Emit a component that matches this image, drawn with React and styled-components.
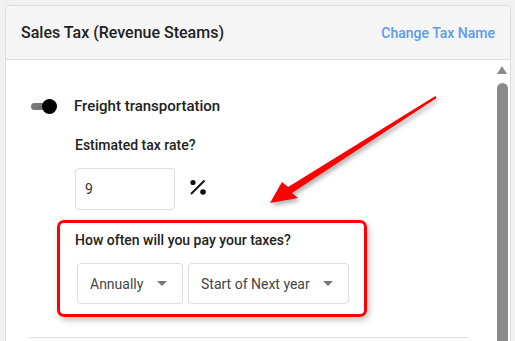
import React from "react";
import styled, { createGlobalStyle } from "styled-components";

const GlobalStyle = createGlobalStyle`
  html, body {
    margin: 0;
    padding: 0;
    background: #f1f1f1;
    font-family: Roboto, "Liberation Sans", sans-serif;
    overflow: hidden;
  }
`;

const Page = styled.div`
  position: relative;
  height: 341px;
  padding: 5px 4px 0 5px;
  box-sizing: border-box;
`;

const Card = styled.div`
  height: 400px;
  border: 1px solid #dcdcdc;
  border-radius: 4px 4px 0 0;
  background: #fff;
  display: flex;
  flex-direction: column;
`;

const Header = styled.div`
  height: 53px;
  flex: none;
  display: flex;
  align-items: center;
  justify-content: space-between;
  padding: 0 15px;
  background: #f5f5f5;
  border-bottom: 1px solid #dcdcdc;
  border-radius: 4px 4px 0 0;
`;

const Title = styled.h2`
  margin: 0;
  font-size: 16px;
  font-weight: 500;
  color: #212121;
`;

const HeaderLink = styled.a`
  font-size: 14px;
  font-weight: 500;
  color: #5b9bee;
  text-decoration: none;
`;

const Body = styled.div`
  flex: 1;
  display: flex;
`;

const Content = styled.div`
  flex: 1;
  padding: 36px 0 0 25px;
`;

const ToggleRow = styled.div`
  display: flex;
  align-items: center;
  gap: 17px;
  height: 20px;
`;

const Switch = styled.span`
  position: relative;
  width: 26px;
  height: 15px;
  display: inline-block;
  &::before {
    content: "";
    position: absolute;
    left: 0;
    top: 4px;
    width: 22px;
    height: 7px;
    border-radius: 4px;
    background: #777;
  }
  &::after {
    content: "";
    position: absolute;
    right: 0;
    top: 0;
    width: 15px;
    height: 15px;
    border-radius: 50%;
    background: #000;
  }
`;

const Label = styled.div`
  font-size: ${(p) => p.$size || 14}px;
  font-weight: 500;
  color: #222;
  line-height: 20px;
`;

const Field = styled.div`
  margin-left: ${(p) => p.$indent || 0}px;
  margin-top: ${(p) => p.$top || 0}px;
`;

const InputRow = styled.div`
  display: flex;
  align-items: center;
  gap: 14px;
  margin-top: 13px;
`;

const TextInput = styled.div`
  width: 100px;
  height: 42px;
  box-sizing: border-box;
  border: 1px solid #dcdcdc;
  border-radius: 4px;
  padding-left: 9px;
  display: flex;
  align-items: center;
  font-size: 14px;
  color: #333;
`;

const Highlight = styled.div`
  margin: 10px 0 0 26px;
  width: 310px;
  box-sizing: border-box;
  border: 3px solid #f00;
  border-radius: 7px;
  padding: 7px 15px 10px 15px;
  box-shadow: 2px 3px 6px rgba(0, 0, 0, 0.25);
`;

const SelectRow = styled.div`
  display: flex;
  gap: 5px;
  margin: 13px 0 0 2px;
`;

const Select = styled.div`
  width: ${(p) => p.$width}px;
  height: 41px;
  box-sizing: border-box;
  border: 1px solid #dcdcdc;
  border-radius: 4px;
  display: flex;
  align-items: center;
  justify-content: space-between;
  padding: 0 15px 0 12px;
  font-size: 14px;
  color: #444;
  &::after {
    content: "";
    border-left: 5px solid transparent;
    border-right: 5px solid transparent;
    border-top: 5px solid #777;
  }
`;

const Divider = styled.hr`
  margin: 20px 26px 0 -1px;
  border: none;
  border-top: 1px solid #dcdcdc;
`;

const Scrollbar = styled.div`
  width: 16px;
  flex: none;
  display: flex;
  flex-direction: column;
  align-items: center;
  padding-top: 6px;
  &::before {
    content: "";
    border-left: 5.5px solid transparent;
    border-right: 5.5px solid transparent;
    border-bottom: 8px solid #8a8a8a;
  }
`;

const Thumb = styled.div`
  margin-top: 9px;
  width: 11px;
  flex: 1;
  border-radius: 6px 6px 0 0;
  background: #8a8a8a;
`;

const Arrow = styled.svg`
  position: absolute;
  left: 0;
  top: 0;
  pointer-events: none;
  filter: drop-shadow(2px 3px 2px rgba(0, 0, 0, 0.3));
`;

function PercentIcon() {
  return (
    <svg width="18" height="18" viewBox="0 0 18 18" style={{ marginTop: -4 }}>
      <circle cx="4" cy="4.5" r="2.6" fill="#111" />
      <circle cx="14" cy="14" r="2.8" fill="#111" />
      <path d="M2 16 L15.5 2.5" stroke="#111" strokeWidth="2" />
    </svg>
  );
}

export default function App() {
  return (
    <>
      <GlobalStyle />
      <Page>
        <Card>
          <Header>
            <Title>Sales Tax (Revenue Steams)</Title>
            <HeaderLink href="#">Change Tax Name</HeaderLink>
          </Header>
          <Body>
            <Content>
              <ToggleRow>
                <Switch />
                <Label $size={15}>Freight transportation</Label>
              </ToggleRow>
              <Field $indent={44} $top={19}>
                <Label>Estimated tax rate?</Label>
                <InputRow>
                  <TextInput>9</TextInput>
                  <PercentIcon />
                </InputRow>
              </Field>
              <Highlight>
                <Label>How often will you pay your taxes?</Label>
                <SelectRow>
                  <Select $width={106}>Annually</Select>
                  <Select $width={161}>Start of Next year</Select>
                </SelectRow>
              </Highlight>
              <Divider />
            </Content>
            <Scrollbar>
              <Thumb />
            </Scrollbar>
          </Body>
        </Card>
        <Arrow width="515" height="341" viewBox="0 0 515 341">
          <polygon
            points="435.4,96 288.1,187 282,182 270,203 298,198 291.9,193 436.6,98"
            fill="#f00"
          />
        </Arrow>
      </Page>
    </>
  );
}
